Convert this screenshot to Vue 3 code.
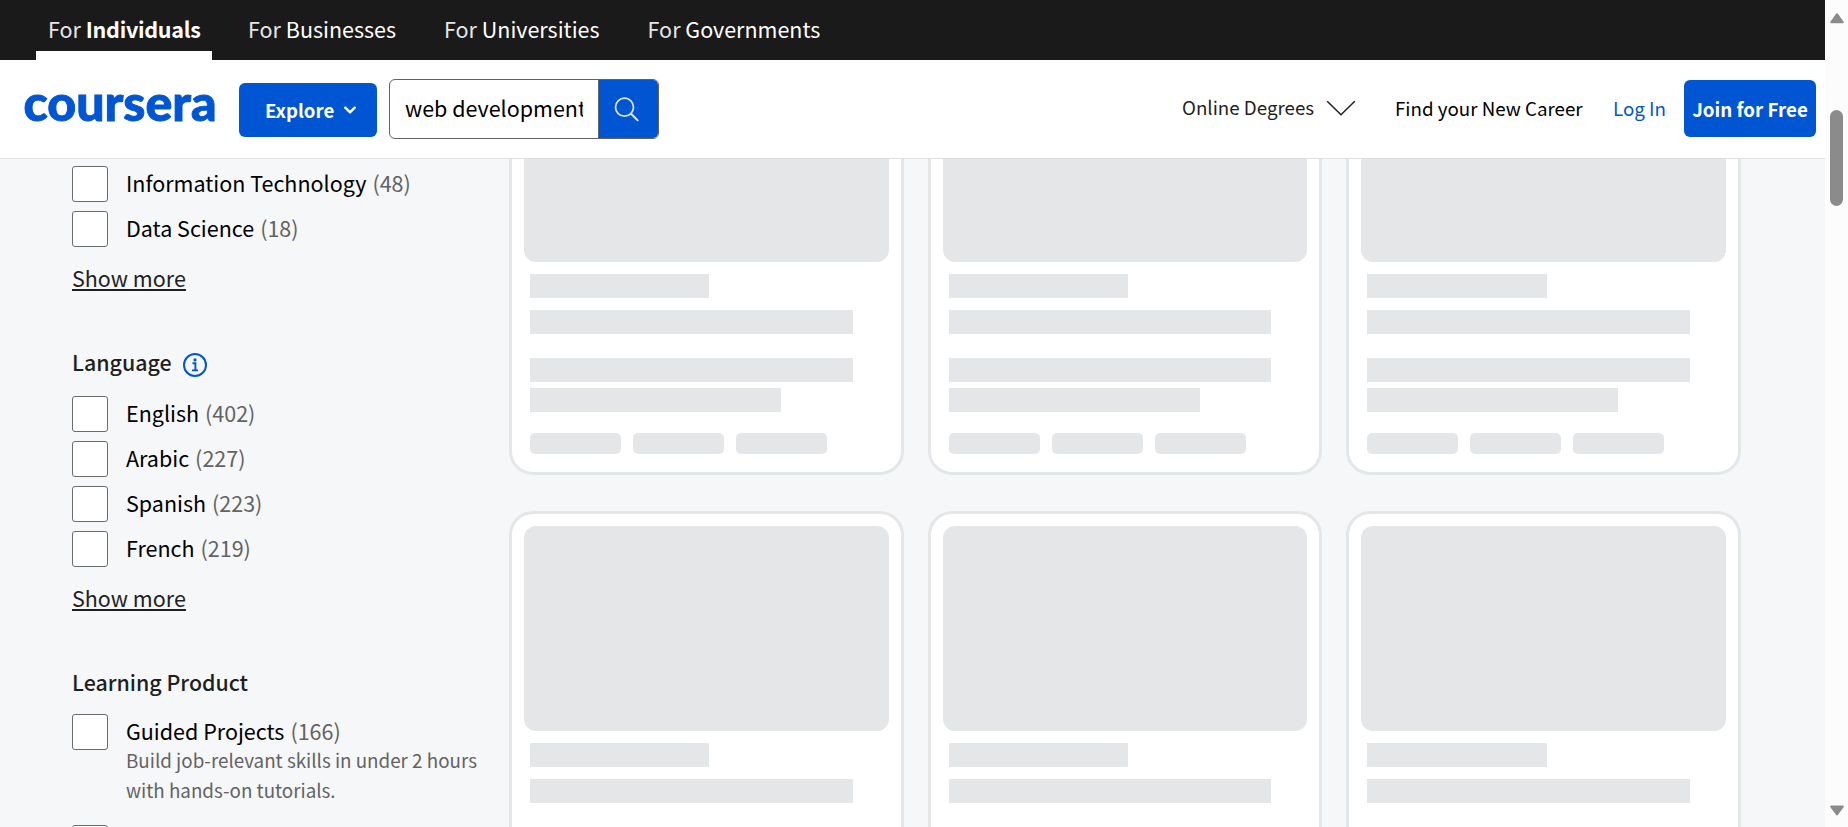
<script setup>
const audiences = ['Individuals', 'Businesses', 'Universities', 'Governments']
const topics = [
  { name: 'Information Technology', count: 48 },
  { name: 'Data Science', count: 18 },
]
const languages = [
  { name: 'English', count: 402 },
  { name: 'Arabic', count: 227 },
  { name: 'Spanish', count: 223 },
  { name: 'French', count: 219 },
]
</script>

<template>
  <div class="window">
    <div class="page">
      <nav class="audience-bar">
        <a v-for="(a, i) in audiences" :key="a" class="audience" :class="{ active: i === 0 }">
          <span class="for">For</span> <span class="who">{{ a }}</span>
        </a>
      </nav>

      <header class="header">
        <svg class="logo" width="192" height="44" viewBox="0 0 192 44">
          <text x="-0.5" y="35.5" textLength="193" lengthAdjust="spacingAndGlyphs">coursera</text>
        </svg>
        <button class="explore">
          <span>Explore</span>
          <svg width="12" height="9" viewBox="0 0 12 9"><path d="M1.3 1.7 6 6.4l4.7-4.7" fill="none" stroke="#fff" stroke-width="2.4" stroke-linecap="round" stroke-linejoin="round" /></svg>
        </button>
        <div class="search">
          <div class="query"><span>web development</span></div>
          <div class="go">
            <svg width="26" height="26" viewBox="0 0 26 26" fill="none" stroke="#dfe6f5" stroke-width="1.7"><circle cx="10.5" cy="10.2" r="9" /><path d="m17 16.7 7.2 7.2" stroke-width="2" /></svg>
          </div>
        </div>
        <div class="links">
          <span class="degrees">Online Degrees</span>
          <svg class="chevron" width="30" height="17" viewBox="0 0 30 17"><path d="M1.2 1.2 15 14.8 28.8 1.2" fill="none" stroke="#1f1f1f" stroke-width="1.5" /></svg>
          <span class="career">Find your New Career</span>
          <span class="login">Log In</span>
          <button class="join"><span>Join for Free</span></button>
        </div>
      </header>

      <main class="content">
        <aside class="filters">
          <label v-for="t in topics" :key="t.name" class="option">
            <i class="box"></i><span class="name">{{ t.name }}</span><span class="count">({{ t.count }})</span>
          </label>
          <a class="more">Show more</a>

          <h2 class="heading">
            <span>Language</span>
            <svg width="24" height="24" viewBox="0 0 24 24" fill="none" stroke="#0056d2"><circle cx="12" cy="12" r="11" stroke-width="2" /><path d="M9.5 10.2h2.9v7M9 17.4h6" stroke-width="1.9" /><circle cx="12" cy="6.9" r="1.6" fill="#0056d2" stroke="none" /></svg>
          </h2>
          <label v-for="l in languages" :key="l.name" class="option">
            <i class="box"></i><span class="name">{{ l.name }}</span><span class="count">({{ l.count }})</span>
          </label>
          <a class="more">Show more</a>

          <h2 class="heading product"><span>Learning Product</span></h2>
          <label class="option guided">
            <i class="box"></i><span class="name">Guided Projects</span><span class="count">(166)</span>
          </label>
          <p class="hint"><span>Build job-relevant skills in under 2 hours</span><br /><span>with hands-on tutorials.</span></p>
          <i class="box"></i>
        </aside>

        <section class="results">
          <article v-for="n in 6" :key="n" class="card">
            <div class="thumb"></div>
            <div class="body">
              <div class="bar short"></div>
              <div class="bar long"></div>
              <div class="bar long spaced"></div>
              <div class="bar medium"></div>
              <div class="pills"><i></i><i></i><i></i></div>
            </div>
          </article>
        </section>
      </main>
    </div>

    <div class="scrollbar">
      <svg width="14" height="11" viewBox="0 0 14 11"><path d="M7 1.2 12.8 9.3H1.2Z" fill="#8b8b8b" stroke="#8b8b8b" stroke-width="2" stroke-linejoin="round" /></svg>
      <div class="handle"></div>
      <svg class="down" width="14" height="11" viewBox="0 0 14 11"><path d="M7 9.5 1.2 1.6h11.6Z" fill="#8b8b8b" stroke="#8b8b8b" stroke-width="2" stroke-linejoin="round" /></svg>
    </div>
  </div>
</template>

<style>
body { overflow: hidden; }
</style>

<style scoped>
* { box-sizing: border-box; }
.window {
  display: flex;
  width: 1848px;
  height: 827px;
  overflow: hidden;
  font-family: "Noto Sans CJK SC", "Open Sans", sans-serif;
  font-size: 21.5px;
  color: #000;
  white-space: nowrap;
}
.page { width: 1825px; display: flex; flex-direction: column; background: #f5f7f9; }
.audience-bar { height: 60px; flex: none; background: #1a1a1a; display: flex; padding-left: 36px; color: #fff; }
.audience { height: 60px; line-height: 58px; padding: 0 12px; margin-right: 24px; position: relative; }
.audience .for { color: #e6e6e6; }
.audience.active { width: 176px; }
.audience.active .who { font-weight: 700; letter-spacing: -0.28px; }
.audience.active::after { content: ""; position: absolute; left: 0; right: 0; bottom: 0; height: 9px; background: #fff; }

.header { height: 99px; flex: none; background: #fff; border-bottom: 1px solid #dfe0e1; display: flex; padding-left: 24px; }
.logo { margin-top: 25px; flex: none; overflow: visible; }
.logo text { font: 900 49px Lato, sans-serif; fill: #0056d2; stroke: #0056d2; stroke-width: 0.9px; }
button { border: 0; padding: 0; margin: 0; font: inherit; font-weight: 700; color: #fff; background: #0056d2; border-radius: 6px; }
.explore { width: 138px; height: 54px; margin: 23px 12px 0 23px; flex: none; display: flex; align-items: center; padding-left: 26px; gap: 10px; font-size: 18.6px; }
.explore span { margin-bottom: 2px; }
.search { width: 270px; height: 60px; margin-top: 19px; flex: none; display: flex; border: 1px solid #636363; border-radius: 6px; overflow: hidden; }
.query { width: 209px; border-right: 1px solid #636363; padding-left: 15px; line-height: 56px; }
.query span { display: block; width: 178px; overflow: hidden; }
.go { flex: 1; background: #0056d2; padding: 17px 0 0 15px; }
.links { display: flex; margin-left: auto; font-size: 18.75px; line-height: 94px; padding-right: 9px; }
.degrees { color: #1f1f1f; width: 145px; }
.chevron { margin: 40px 39px 0 -1px; }
.career { width: 218px; line-height: 96px; }
.login { color: #0056d2; width: 71px; line-height: 96px; }
.join { width: 132px; height: 57px; margin-top: 20px; line-height: 56px; font-size: 18.75px; }

.content { flex: 1; min-height: 0; overflow: hidden; display: flex; }
.filters { width: 437px; margin-left: 72px; padding-top: 7px; flex: none; }
.option { display: flex; height: 36px; margin-bottom: 9px; line-height: 34px; }
.box { display: block; width: 36px; height: 36px; margin-right: 18px; background: #fff; border: 1px solid #6b6b6b; border-radius: 3px; flex: none; }
.name { margin-right: 6px; }
.count { color: #636363; }
.more { display: block; width: 114px; height: 32px; margin-top: 12px; line-height: 37px; border-bottom: 2px solid #1f1f1f; color: #1f1f1f; }
.heading { margin: 56px 0 13px; height: 36px; line-height: 36px; font-size: 21.4px; font-weight: 500; color: #1f1f1f; display: flex; gap: 11px; align-items: center; }
.heading span { margin-bottom: 7px; }
.product { margin-bottom: 11px; }
.guided { margin-bottom: 0; }
.hint { margin: -5px 0 20px 54px; font-size: 18.8px; line-height: 30px; color: #636363; }

.results { display: grid; grid-template-columns: repeat(3, 394.67px); grid-auto-rows: 433px; gap: 36px 24px; margin-top: -117px; flex: none; }
.card { border: 3px solid #e5e6e8; border-radius: 24px; background: #fff; padding: 12px; }
.thumb { height: 205px; border-radius: 12px; background: #e5e6e8; }
.body { padding: 12px 6px 0; }
.bar { height: 24px; background: #e5e6e8; margin-bottom: 12px; }
.short { width: 179.3px; }
.long { width: 322.7px; }
.spaced { margin-top: 24px; margin-bottom: 6px; }
.medium { width: 251px; margin-bottom: 21px; }
.pills { display: flex; gap: 12px; }
.pills i { width: 91px; height: 21px; border-radius: 5px; background: #e5e6e8; }

.scrollbar { width: 23px; background: #fcfcfc; display: flex; flex-direction: column; align-items: center; padding: 13px 0 11px; }
.handle { width: 13px; height: 96px; margin-top: 86px; border-radius: 7px; background: #8b8b8b; }
.down { margin-top: auto; }
</style>
